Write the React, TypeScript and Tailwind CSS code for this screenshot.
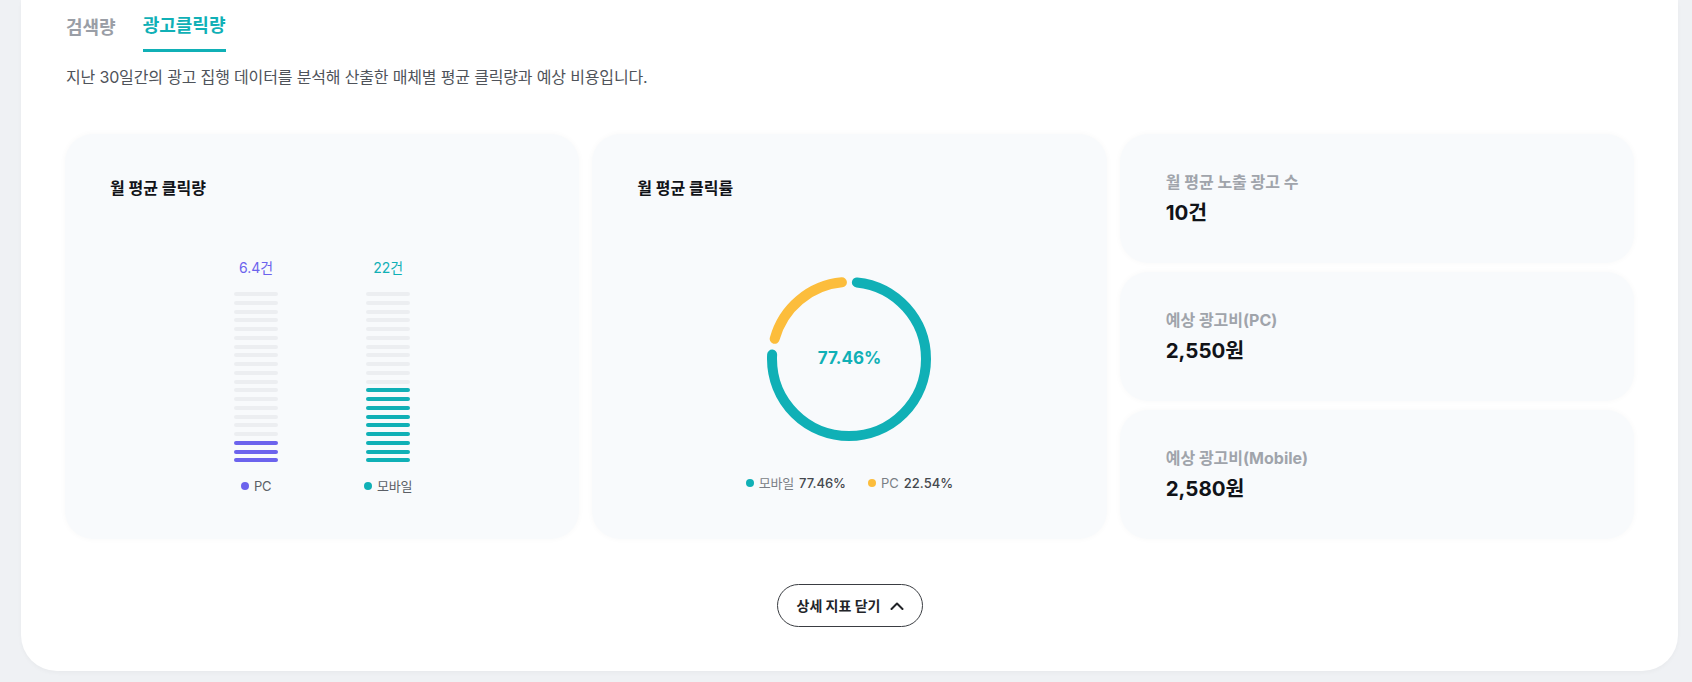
import { ReactNode } from "react";

const FONT = { fontFamily: "Inter, 'Noto Sans CJK KR', 'Noto Sans', sans-serif" };

const TEAL = "#10b0b6";
const PURPLE = "#6c63ed";
const YELLOW = "#fcbd3c";

function BarStack({ filled, color }: { filled: number; color: string }) {
  const total = 20;
  return (
    <div className="flex w-[44px] flex-col gap-[4.75px]">
      {Array.from({ length: total }).map((_, i) => (
        <div
          key={i}
          className="h-[4px] w-full rounded-full"
          style={{ backgroundColor: i >= total - filled ? color : "#eceef1" }}
        />
      ))}
    </div>
  );
}

function BarColumn({
  value,
  label,
  filled,
  color,
}: {
  value: string;
  label: string;
  filled: number;
  color: string;
}) {
  return (
    <div className="flex w-[44px] flex-col items-center">
      <span className="whitespace-nowrap text-[14px] leading-[20px]" style={{ color }}>
        {value}
      </span>
      <div className="mt-[14px]">
        <BarStack filled={filled} color={color} />
      </div>
      <div className="mt-[15px] flex items-center gap-[5px] whitespace-nowrap">
        <span className="h-[8px] w-[8px] rounded-full" style={{ backgroundColor: color }} />
        <span className="text-[13px] leading-[18px] tracking-[-0.02em] text-[#5b5f66]">{label}</span>
      </div>
    </div>
  );
}

function Donut() {
  const r = 77;
  const c = 2 * Math.PI * r;
  const gap = 16;
  const segs = [
    { v: 0.7746, color: TEAL },
    { v: 0.2254, color: YELLOW },
  ];
  let acc = 0;
  return (
    <div className="relative h-[164px] w-[164px]">
      <svg width="164" height="164" viewBox="0 0 164 164">
        {segs.map((s) => {
          const start = acc * c + gap / 2;
          const len = s.v * c - gap;
          acc += s.v;
          return (
            <circle
              key={s.color}
              cx="82"
              cy="82"
              r={r}
              fill="none"
              stroke={s.color}
              strokeWidth="10"
              strokeLinecap="round"
              strokeDasharray={`${len} ${c}`}
              strokeDashoffset={-start}
              transform="rotate(-90 82 82)"
            />
          );
        })}
      </svg>
      <div className="absolute inset-0 flex items-center justify-center">
        <span className="text-[17px] font-bold text-[#10b0b6]">77.46%</span>
      </div>
    </div>
  );
}

function Card({ children, className = "" }: { children: ReactNode; className?: string }) {
  return (
    <div
      className={`rounded-[28px] bg-[#f8fafc] shadow-[0_0_6px_rgba(15,23,42,0.03)] ${className}`}
    >
      {children}
    </div>
  );
}

function StatCard({ label, value }: { label: string; value: string }) {
  return (
    <Card className="flex flex-1 flex-col justify-center pl-[46px] rounded-[24px]">
      <span className="text-[16px] font-bold leading-[22px] text-[#a0a4ab]">{label}</span>
      <span className="mt-1.5 text-[20.5px] font-bold leading-[28px] text-[#111318]">{value}</span>
    </Card>
  );
}

export default function App() {
  return (
    <div className="min-h-screen bg-[#eff1f4] pb-[11px] pl-[21px] pr-[14px]" style={FONT}>
      <div className="rounded-b-[36px] bg-white px-[44px] pb-[44px] pt-[13px] shadow-[0_2px_4px_rgba(0,0,0,0.03)]">
        <div className="flex gap-[27px] pl-[1px]">
          <button className="pb-[10px] text-[18px] font-bold leading-[26px] text-[#9a9ea6]">
            검색량
          </button>
          <button className="border-b-[3px] border-[#10b0b6] pb-[10px] text-[18px] font-bold leading-[26px] text-[#10b0b6]">
            광고클릭량
          </button>
        </div>

        <p className="mt-[14px] pl-[1px] text-[16px] leading-[22px] tracking-[-0.01em] text-[#4f535a]">
          지난 30일간의 광고 집행 데이터를 분석해 산출한 매체별 평균 클릭량과 예상 비용입니다.
        </p>

        <div className="mt-[46px] grid h-[405px] grid-cols-3 gap-[13px]">
          <Card className="flex flex-col pt-[43px]">
            <h3 className="pl-[45px] text-[16px] font-bold leading-[22px] text-[#111318]">
              월 평균 클릭량
            </h3>
            <div className="mt-[59px] flex justify-center gap-[88px]">
              <BarColumn value="6.4건" label="PC" filled={3} color={PURPLE} />
              <BarColumn value="22건" label="모바일" filled={9} color={TEAL} />
            </div>
          </Card>

          <Card className="flex flex-col pt-[43px]">
            <h3 className="pl-[45px] text-[16px] font-bold leading-[22px] text-[#111318]">
              월 평균 클릭률
            </h3>
            <div className="mt-[78px] flex justify-center">
              <Donut />
            </div>
            <div className="mt-[33px] flex items-center justify-center gap-[22px] text-[13px] leading-[18px]">
              <div className="flex items-center gap-[5px]">
                <span className="h-[8px] w-[8px] rounded-full bg-[#10b0b6]" />
                <span className="tracking-[-0.02em] text-[#7a7e85]">모바일</span>
                <span className="font-medium text-[#45484e]">77.46%</span>
              </div>
              <div className="flex items-center gap-[5px]">
                <span className="h-[8px] w-[8px] rounded-full bg-[#fcbd3c]" />
                <span className="text-[#7a7e85]">PC</span>
                <span className="font-medium text-[#45484e]">22.54%</span>
              </div>
            </div>
          </Card>

          <div className="flex flex-col gap-[9px]">
            <StatCard label="월 평균 노출 광고 수" value="10건" />
            <StatCard label="예상 광고비(PC)" value="2,550원" />
            <StatCard label="예상 광고비(Mobile)" value="2,580원" />
          </div>
        </div>

        <div className="mt-[45px] flex justify-center">
          <button className="flex h-[43px] w-[146px] items-center justify-center gap-[10px] rounded-full border border-[#3a3d42] pl-[2px] text-[14px] font-bold text-[#222428]">
            상세 지표 닫기
            <svg width="14" height="8" viewBox="0 0 14 8" fill="none">
              <path d="M1.5 7L7 1.5L12.5 7" stroke="#222428" strokeWidth="2" strokeLinecap="round" strokeLinejoin="round" />
            </svg>
          </button>
        </div>
      </div>
    </div>
  );
}
